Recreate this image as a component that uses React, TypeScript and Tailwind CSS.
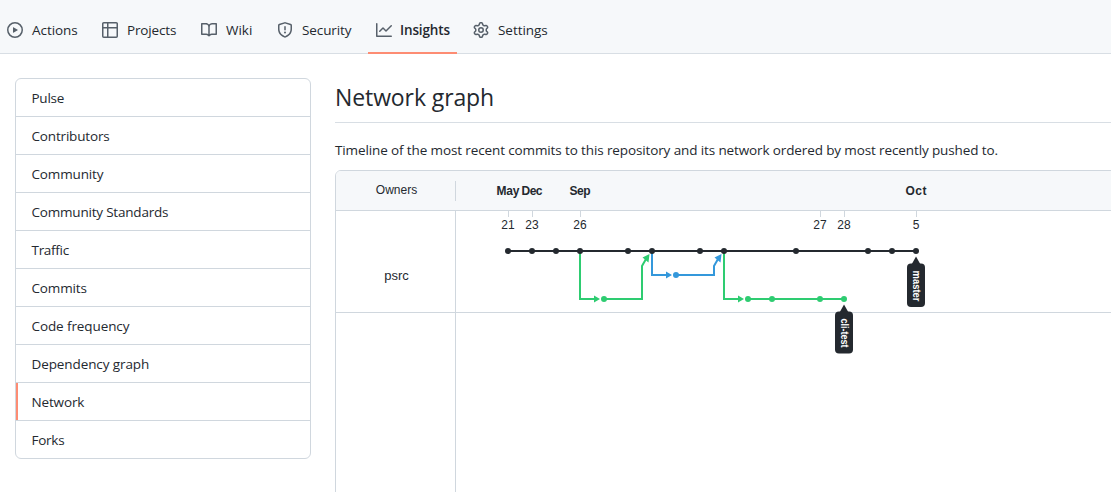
import type { ReactNode } from "react";

const tabs = [
  { label: "Actions", width: "w-[95px]", spacing: "tracking-[-0.05px]", d: "M8 0a8 8 0 1 1 0 16A8 8 0 0 1 8 0ZM1.5 8a6.5 6.5 0 1 0 13 0 6.5 6.5 0 0 0-13 0Zm4.879-2.773 4.264 2.559a.25.25 0 0 1 0 .428l-4.264 2.559A.25.25 0 0 1 6 10.559V5.442a.25.25 0 0 1 .379-.215Z" },
  { label: "Projects", width: "w-[99px]", spacing: "tracking-[-0.15px]", d: "M0 1.75C0 .784.784 0 1.75 0h12.5C15.216 0 16 .784 16 1.75v12.5A1.75 1.75 0 0 1 14.25 16H1.75A1.75 1.75 0 0 1 0 14.25ZM6.5 6.5v8h7.75a.25.25 0 0 0 .25-.25V6.5Zm8-1.5V1.75a.25.25 0 0 0-.25-.25H6.5V5Zm-13 1.5v7.75c0 .138.112.25.25.25H5v-8ZM5 5V1.5H1.75a.25.25 0 0 0-.25.25V5Z" },
  { label: "Wiki", width: "w-[76px]", spacing: "tracking-[0px]", d: "M0 1.75A.75.75 0 0 1 .75 1h4.253c1.227 0 2.317.59 3 1.501A3.743 3.743 0 0 1 11.006 1h4.245a.75.75 0 0 1 .75.75v10.5a.75.75 0 0 1-.75.75h-4.507a2.25 2.25 0 0 0-1.591.659l-.622.621a.75.75 0 0 1-1.06 0l-.622-.621A2.25 2.25 0 0 0 5.258 13H.75a.75.75 0 0 1-.75-.75Zm7.251 10.324.004-5.073-.002-2.253A2.25 2.25 0 0 0 5.003 2.5H1.5v9h3.757a3.75 3.75 0 0 1 1.994.574ZM8.755 4.75l-.004 7.322a3.752 3.752 0 0 1 1.992-.572H14.5v-9h-3.495a2.25 2.25 0 0 0-2.25 2.25Z" },
  { label: "Security", width: "w-[99px]", spacing: "tracking-[-0.1px]", d: "M7.467.133a1.748 1.748 0 0 1 1.066 0l5.25 1.68A1.75 1.75 0 0 1 15 3.48V7c0 1.566-.32 3.182-1.303 4.682-.983 1.498-2.585 2.813-5.032 3.855a1.697 1.697 0 0 1-1.33 0c-2.447-1.042-4.049-2.357-5.032-3.855C1.32 10.182 1 8.566 1 7V3.48a1.75 1.75 0 0 1 1.217-1.667Zm.61 1.429a.25.25 0 0 0-.153 0l-5.25 1.68a.25.25 0 0 0-.174.238V7c0 1.358.275 2.666 1.057 3.86.784 1.194 2.121 2.34 4.366 3.297a.196.196 0 0 0 .154 0c2.245-.956 3.582-2.104 4.366-3.298C13.225 9.666 13.5 8.36 13.5 7V3.48a.251.251 0 0 0-.174-.237l-5.25-1.68ZM8.75 4.75v3a.75.75 0 0 1-1.5 0v-3a.75.75 0 0 1 1.5 0ZM9 10.5a1 1 0 1 1-2 0 1 1 0 0 1 2 0Z" },
  { label: "Insights", width: "w-[89px] mr-2", spacing: "-ml-px tracking-[-0.15px]", active: true, d: "M1.5 1.75V13.5h13.75a.75.75 0 0 1 0 1.5H.75a.75.75 0 0 1-.75-.75V1.75a.75.75 0 0 1 1.5 0Zm14.28 2.53-5.25 5.25a.75.75 0 0 1-1.06 0L7 7.06 4.28 9.78a.751.751 0 0 1-1.042-.018.751.751 0 0 1-.018-1.042l3.25-3.25a.75.75 0 0 1 1.06 0L10 7.94l4.72-4.72a.751.751 0 0 1 1.042.018.751.751 0 0 1 .018 1.042Z" },
  { label: "Settings", width: "w-[99px]", spacing: "tracking-[-0.05px]", d: "M8 0a8.2 8.2 0 0 1 .701.031C9.444.095 9.99.645 10.16 1.29l.288 1.107c.018.066.079.158.212.224.231.114.454.243.668.386.123.082.233.09.299.071l1.103-.303c.644-.176 1.392.021 1.82.63.27.385.506.792.704 1.218.315.675.111 1.422-.364 1.891l-.814.806c-.049.048-.098.147-.088.294.016.257.016.515 0 .772-.01.147.038.246.088.294l.814.806c.475.469.679 1.216.364 1.891a7.977 7.977 0 0 1-.704 1.217c-.428.61-1.176.807-1.82.63l-1.102-.302c-.067-.019-.177-.011-.3.071a5.909 5.909 0 0 1-.668.386c-.133.066-.194.158-.211.224l-.29 1.106c-.168.646-.715 1.196-1.458 1.26a8.006 8.006 0 0 1-1.402 0c-.743-.064-1.289-.614-1.458-1.26l-.289-1.106c-.018-.066-.079-.158-.212-.224a5.738 5.738 0 0 1-.668-.386c-.123-.082-.233-.09-.299-.071l-1.103.303c-.644.176-1.392-.021-1.82-.63a8.12 8.12 0 0 1-.704-1.218c-.315-.675-.111-1.422.363-1.891l.815-.806c.05-.048.098-.147.088-.294a6.214 6.214 0 0 1 0-.772c.01-.147-.038-.246-.088-.294l-.815-.806C.635 6.045.431 5.298.746 4.623a7.92 7.92 0 0 1 .704-1.217c.428-.61 1.176-.807 1.82-.63l1.102.302c.067.019.177.011.3-.071.214-.143.437-.272.668-.386.133-.066.194-.158.211-.224l.29-1.106C6.009.645 6.556.095 7.299.03 7.53.01 7.764 0 8 0Zm-.571 1.525c-.036.003-.108.036-.137.146l-.289 1.105c-.147.561-.549.967-.998 1.189-.173.086-.34.183-.5.29-.417.278-.97.423-1.529.27l-1.103-.303c-.109-.03-.175.016-.195.045-.22.312-.412.644-.573.99-.014.031-.021.11.059.19l.815.806c.411.406.562.957.53 1.456a4.709 4.709 0 0 0 0 .582c.032.499-.119 1.05-.53 1.456l-.815.806c-.081.08-.073.159-.059.19.162.346.353.677.573.989.02.03.085.076.195.046l1.102-.303c.56-.153 1.113-.008 1.53.27.161.107.328.204.501.29.447.222.85.629.997 1.189l.289 1.105c.029.109.101.143.137.146a6.6 6.6 0 0 0 1.142 0c.036-.003.108-.036.137-.146l.289-1.105c.147-.561.549-.967.998-1.189.173-.086.34-.183.5-.29.417-.278.97-.423 1.529-.27l1.103.303c.109.029.175-.016.195-.045.22-.313.411-.644.573-.99.014-.031.021-.11-.059-.19l-.815-.806c-.411-.406-.562-.957-.53-1.456a4.709 4.709 0 0 0 0-.582c-.032-.499.119-1.05.53-1.456l.815-.806c.081-.08.073-.159.059-.19a6.464 6.464 0 0 0-.573-.989c-.02-.03-.085-.076-.195-.046l-1.102.303c-.56.153-1.113.008-1.53-.27a4.44 4.44 0 0 0-.501-.29c-.447-.222-.85-.629-.997-1.189l-.289-1.105c-.029-.11-.101-.143-.137-.146a6.6 6.6 0 0 0-1.142 0ZM11 8a3 3 0 1 1-6 0 3 3 0 0 1 6 0ZM9.5 8a1.5 1.5 0 1 0-3.001.001A1.5 1.5 0 0 0 9.5 8Z" },
];

const menu = [
  { label: "Pulse", spacing: "tracking-[-0.25px]" },
  { label: "Contributors", spacing: "tracking-[-0.17px]" },
  { label: "Community", spacing: "tracking-[-0.15px]" },
  { label: "Community Standards", spacing: "tracking-[-0.2px]" },
  { label: "Traffic", spacing: "tracking-[-0.3px]" },
  { label: "Commits", spacing: "tracking-[-0.15px]" },
  { label: "Code frequency", spacing: "tracking-[-0.1px]" },
  { label: "Dependency graph", spacing: "tracking-[-0.1px]" },
  { label: "Network", spacing: "tracking-[-0.15px]", active: true },
  { label: "Forks", spacing: "tracking-[-0.25px]" },
];

const months = [
  { x: 52, label: "May" },
  { x: 76, label: "Dec" },
  { x: 124, label: "Sep" },
  { x: 460, label: "Oct" },
];

const days = [
  { x: 52, label: "21" },
  { x: 76, label: "23" },
  { x: 124, label: "26" },
  { x: 364, label: "27" },
  { x: 388, label: "28" },
  { x: 460, label: "5" },
];

function Branch({ color, d, heads, children }: { color: string; d: string; heads: string; children?: ReactNode }) {
  return (
    <g>
      <path d={d} fill="none" stroke={color} strokeWidth="2" />
      <path d={heads} fill={color} />
      <g fill={color}>{children}</g>
    </g>
  );
}

function Tag({ x, y, label, height, length }: { x: number; y: number; label: string; height: number; length: number }) {
  return (
    <g transform={`translate(${x} ${y})`}>
      <path d="M0 0L4.5 8H-4.5Z" fill="#24292f" />
      <rect x="-9" y="7" width="18" height={height} rx="4" fill="#24292f" />
      <text transform="translate(-2.6 14) rotate(90)" fontSize="10" fontWeight="700" fill="#fff" textLength={length} lengthAdjust="spacingAndGlyphs">
        {label}
      </text>
    </g>
  );
}

function Timeline() {
  return (
    <svg width="655" height="321" className="absolute left-0 top-0 font-['Liberation_Sans',Arial,sans-serif]">
      <g fontSize="12" fontWeight="700" fill="#24292f" textAnchor="middle">
        {months.map((m) => (
          <text key={m.label} x={m.x} y="24" textLength={m.label === "May" ? 23 : 21}>{m.label}</text>
        ))}
      </g>
      <g fontSize="12" fill="#24292f" textAnchor="middle">
        {days.map((t) => (
          <g key={t.label}>
            <path d={`M${t.x + 0.5} 40v6`} stroke="#d0d7de" />
            <text x={t.x} y="58">{t.label}</text>
          </g>
        ))}
      </g>
      <Branch color="#2ecc71" d="M124 80V128H142M148 128H186V95L190 88" heads="M138 124.5L144 128L138 131.5ZM193.5 83L192.5 91.5L186.5 86.5Z">
        <circle cx="148" cy="128" r="3" />
      </Branch>
      <Branch color="#3498db" d="M196 80V104H214M220 104H258V95L262 88" heads="M210 100.5L216 104L210 107.5ZM265.5 83L264.5 91.5L258.5 86.5Z">
        <circle cx="220" cy="104" r="3" />
      </Branch>
      <Branch color="#2ecc71" d="M268 80V128H286M292 128H388" heads="M282 124.5L288 128L282 131.5Z">
        {[292, 316, 364, 388].map((x) => <circle key={x} cx={x} cy="128" r="3" />)}
      </Branch>
      <Branch color="#24292f" d="M52 80H460" heads="">
        {[52, 76, 100, 124, 172, 196, 244, 268, 340, 412, 436, 460].map((x) => <circle key={x} cx={x} cy="80" r="3" />)}
      </Branch>
      <Tag x={460} y={85.5} label="master" height={43.5} length={31} />
      <Tag x={388} y={133.5} label="cli-test" height={42} length={29} />
    </svg>
  );
}

export default function App() {
  return (
    <div className="h-[492px] w-[1111px] overflow-hidden bg-white font-['Open_Sans','Noto_Sans',sans-serif] text-[13.5px] text-[#24292f]">
      <nav className="flex h-[54px] border-b border-[#d8dee4] bg-[#f6f8fa]">
        <div className="-ml-px flex">
          {tabs.map((t) => (
            <a key={t.label} className={`flex h-[54px] shrink-0 items-center gap-[9px] border-b-2 pl-2 pt-[7px] ${t.width} ${t.active ? "border-[#fd8c73] font-semibold" : "border-transparent"}`}>
              <svg width="16" height="16" viewBox="0 0 16 16" fill="#57606a" className="shrink-0">
                <path d={t.d} />
              </svg>
              <span className={`whitespace-nowrap leading-5 ${t.spacing}`}>{t.label}</span>
            </a>
          ))}
        </div>
      </nav>
      <main className="flex gap-6 pl-[15px] pt-6">
        <aside className="h-[381px] w-[296px] shrink-0 overflow-hidden rounded-md border border-[#d0d7de]">
          {menu.map((m) => (
            <a key={m.label} className={`flex h-[38px] items-center border-b border-[#d0d7de] pl-[15.5px] pt-px last:border-b-0 last:pt-0 ${m.active ? "shadow-[inset_2px_0_0_#fd8c73]" : ""}`}>
              <span className={m.spacing}>{m.label}</span>
            </a>
          ))}
        </aside>
        <section className="min-w-0 flex-1">
          <h1 className="h-[45px] border-b border-[#d8dee4] text-[23px] leading-[38px] tracking-[-0.1px]">Network graph</h1>
          <p className="mt-[17px] h-[30px] whitespace-nowrap leading-5 tracking-[-0.12px]">
            Timeline of the most recent commits to this repository and its network ordered by most recently pushed to.
          </p>
          <div className="flex h-[330px] w-[790px] overflow-hidden rounded-md border border-[#d0d7de] font-['Liberation_Sans',Arial,sans-serif] text-[#24292f]">
            <div className="flex w-[120px] shrink-0 flex-col text-center">
              <div className="flex h-10 items-center border-b border-[#d0d7de] bg-[#f6f8fa]">
                <span className="h-5 flex-1 border-r border-[#d0d7de] pl-0.5 text-xs leading-[18px]">Owners</span>
              </div>
              <div className="h-[102px] border-b border-r border-[#d0d7de] pl-0.5 text-[13px] leading-[129px]">psrc</div>
              <div className="flex-1 border-r border-[#d0d7de]" />
            </div>
            <div className="relative flex-1">
              <div className="h-10 border-b border-[#d0d7de] bg-[#f6f8fa]" />
              <div className="h-[102px] border-b border-[#d0d7de]" />
              <Timeline />
            </div>
          </div>
        </section>
      </main>
    </div>
  );
}
